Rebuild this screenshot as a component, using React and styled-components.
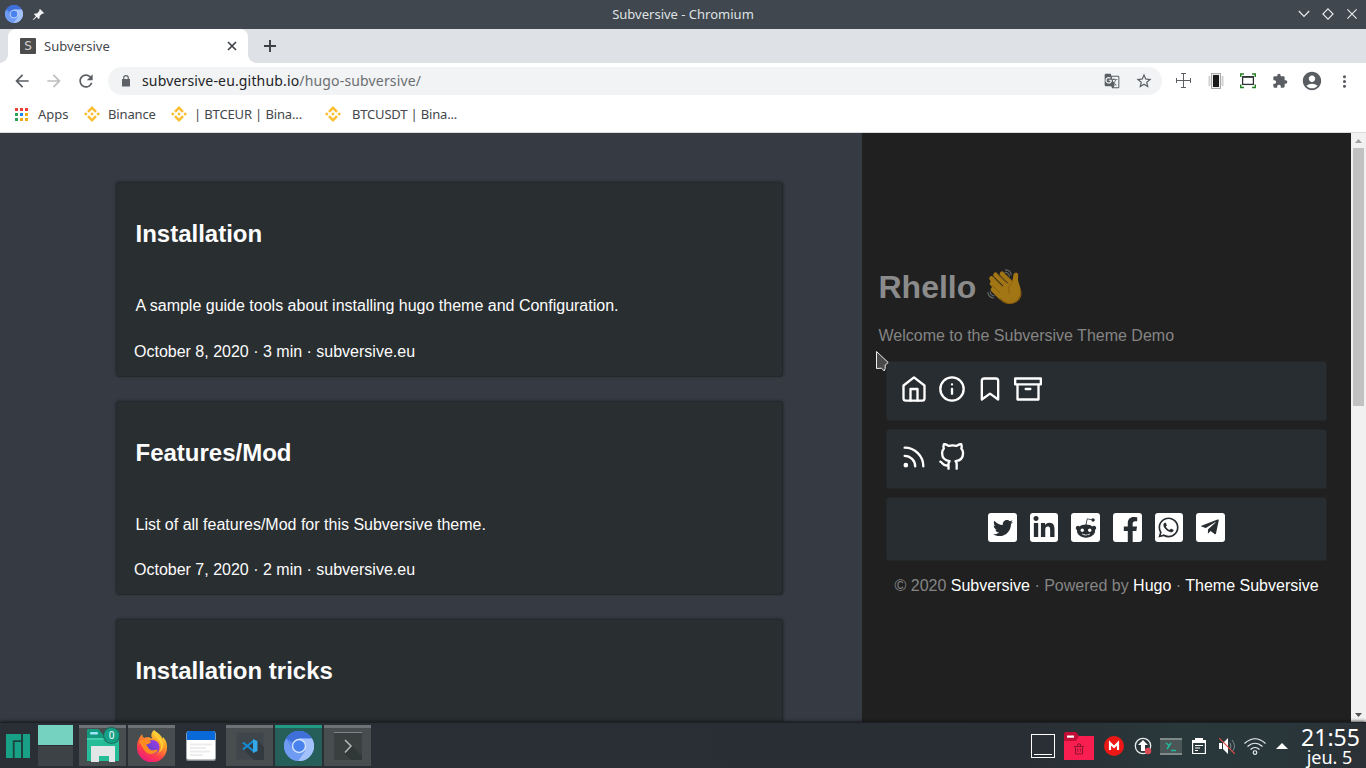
import React from "react";
import styled, { createGlobalStyle } from "styled-components";
import {
  MdArrowBack, MdArrowForward, MdRefresh, MdGTranslate, MdStarBorder,
  MdExtension, MdAccountCircle, MdMoreVert,
} from "react-icons/md";
import { SiBinance } from "react-icons/si";
import {
  FaTwitter, FaLinkedinIn, FaRedditAlien, FaFacebookF, FaWhatsapp, FaTelegramPlane,
} from "react-icons/fa";

const GlobalStyle = createGlobalStyle`
  * { box-sizing: border-box; }
  body { margin: 0; overflow: hidden; background: #202020; }
  svg { display: block; flex: none; }
`;

const Desktop = styled.div`
  position: relative;
  display: flex;
  flex-direction: column;
  width: 1366px;
  height: 768px;
  overflow: hidden;
  font-family: "Noto Sans", sans-serif;
  font-size: 13px;
`;

/* Window title */
const TitleBar = styled.header`
  display: grid;
  grid-template-columns: 1fr auto 1fr;
  align-items: center;
  height: 29px;
  padding: 0 8px 1px 5px;
  background: #40474e;
  color: #dfe2e4;
`;
const TitleSide = styled.div`
  display: flex;
  align-items: center;
  justify-content: ${(p) => (p.$end ? "flex-end" : "flex-start")};
  gap: ${(p) => p.$gap}px;
`;
const TitleText = styled.div`
  padding-left: 3px;
  line-height: 28px;
`;

/* Tabs */
const TabStrip = styled.div`
  display: flex;
  height: 34px;
  padding-left: 8px;
  background: #dee1e6;
`;
const Tab = styled.div`
  position: relative;
  display: flex;
  align-items: center;
  width: 240px;
  padding: 0 11px 0 12px;
  background: #fff;
  border-radius: 8px 8px 0 0;
  color: #45494d;
  &::before, &::after {
    content: "";
    position: absolute;
    bottom: 0;
    width: 8px;
    height: 8px;
  }
  &::before { left: -8px; background: radial-gradient(circle at 0 0, #dee1e6 7.5px, #fff 8px); }
  &::after { right: -8px; background: radial-gradient(circle at 100% 0, #dee1e6 7.5px, #fff 8px); }
`;
const Favicon = styled.div`
  width: 16px;
  height: 16px;
  margin-right: 8px;
  border-radius: 1px;
  background: #4c4c4c;
  color: #d4d4d4;
  font: 12px/16px "DejaVu Sans", sans-serif;
  text-align: center;
`;
const TabTitle = styled.span`
  flex: 1;
`;
const NewTab = styled.div`
  display: flex;
  align-items: center;
  margin-left: 16px;
`;

/* Toolbar */
const Toolbar = styled.div`
  display: flex;
  align-items: center;
  height: 36px;
  padding: 0 6px;
  background: #fff;
  color: #5f6368;
`;
const ToolSlot = styled.div`
  display: flex;
  align-items: center;
  justify-content: center;
  width: 32px;
  height: 28px;
  color: ${(p) => (p.$muted ? "#bcbec1" : "#5a5e63")};
`;
const AddressBar = styled.div`
  display: flex;
  align-items: center;
  flex: 1;
  height: 28px;
  margin: 0 6px;
  padding: 0 2px 0 14px;
  border-radius: 14px;
  background: #f1f3f4;
`;
const Url = styled.span`
  flex: 1;
  margin-left: 12px;
  color: #6b6f73;
  font-size: 14px;
  letter-spacing: 0.16px;
  line-height: 28px;
  b { color: #222427; font-weight: 400; }
`;
const BookmarkBar = styled.div`
  display: flex;
  align-items: center;
  height: 34px;
  padding: 0 0 3px 15px;
  border-bottom: 1px solid #d9dbdf;
  background: #fff;
  color: #43474b;
`;
const Bookmark = styled.div`
  display: flex;
  align-items: center;
  width: ${(p) => p.$width}px;
  letter-spacing: ${(p) => p.$tracking || 0}px;
  white-space: pre;
  svg { margin-right: ${(p) => p.$gap}px; }
`;

/* Web page */
const Viewport = styled.div`
  display: flex;
  height: 589px;
  font-family: "Liberation Sans", Arial, sans-serif;
  font-size: 16px;
  overflow: hidden;
`;
const PostList = styled.main`
  width: 862px;
  padding: 50px 79.5px 0 117px;
  background: #363a43;
`;
const Card = styled.article`
  height: 193.5px;
  margin-bottom: 25px;
  padding: 37px 18px 0 18.5px;
  border-radius: 3px;
  background: #292e31;
  box-shadow: -0.5px -1px 3px rgba(22, 25, 28, 0.8), inset -1px -1px 0 #23282b;
  color: #fdfdfd;
`;
const PostTitle = styled.h2`
  margin: 0;
  font-size: 24px;
  line-height: 28px;
`;
const Summary = styled.p`
  margin: 49px 0 0;
  line-height: 18px;
`;
const PostMeta = styled.p`
  margin: 27.6px 0 0 -1.5px;
  line-height: 18px;
`;
const Sidebar = styled.aside`
  display: flex;
  flex-direction: column;
  width: 489px;
  padding: 136px 25px 0 16.5px;
  background: #202020;
  color: #858585;
`;
const Greeting = styled.h1`
  display: flex;
  align-items: center;
  gap: 11px;
  height: 37px;
  margin: 0;
  color: #8b8b8b;
  font-size: 32px;
  line-height: 37px;
  svg { margin-bottom: 2px; }
`;
const Welcome = styled.p`
  margin: 20px 0 17px;
  line-height: 19px;
`;
const IconPanel = styled.div`
  display: flex;
  align-items: flex-start;
  justify-content: ${(p) => (p.$centered ? "center" : "flex-start")};
  gap: ${(p) => (p.$centered ? 13 : 10)}px;
  height: ${(p) => (p.$centered ? 62 : 58)}px;
  margin: 0 0 10px 8.5px;
  padding: ${(p) => (p.$centered ? 15 : 13)}px 13px 0;
  border-radius: 2px;
  background: #282d31;
  box-shadow: 0 0 1px 1px #24282a;
  color: #fff;
`;
const ShareTile = styled.span`
  display: flex;
  align-items: center;
  justify-content: center;
  width: 28.6px;
  height: 28.6px;
  padding: ${(p) => p.$pad || 0};
  border-radius: 3px;
  background: #fff;
  color: #282d31;
`;
const Footer = styled.footer`
  margin: 6px 0 0 16px;
  line-height: 20px;
  white-space: nowrap;
  b { color: #fff; font-weight: 400; }
`;
const ScrollBar = styled.div`
  display: flex;
  flex-direction: column;
  align-items: center;
  width: 15px;
  background: #f1f1f1;
`;
const ScrollThumb = styled.div`
  width: 11px;
  height: 258px;
  background: #c1c1c1;
`;
const ScrollArrow = styled.div`
  display: flex;
  align-items: center;
  height: 15px;
  margin-top: ${(p) => (p.$down ? "auto" : 0)};
`;

const Pointer = styled.svg`
  position: absolute;
  left: 875px;
  top: 350px;
`;

/* Desktop panel */
const TaskBar = styled.nav`
  display: flex;
  align-items: center;
  height: 46px;
  padding: 0 2px 0 6px;
  background: linear-gradient(90deg, #2a2f35 0, #292e34 75%, #29383b 86%, #29373b 93%, #2a3036 100%);
  box-shadow: inset 0 1px 0 #1d2023, 0 -1px 3px rgba(15, 17, 19, 0.7);
  color: #fff;
  z-index: 1;
`;
const Pager = styled.div`
  display: grid;
  grid-template-rows: 20px 20px;
  gap: 1px;
  width: 35px;
  height: 41px;
  margin: 0 6px 0 8px;
`;
const PagerCell = styled.div`
  background: ${(p) => (p.$active ? "#75d2c0" : "#3c4246")};
`;
const TaskList = styled.div`
  display: flex;
  gap: 2px;
`;
const Task = styled.div`
  display: flex;
  align-items: center;
  justify-content: center;
  position: relative;
  width: 47px;
  height: 41px;
  padding-bottom: 2px;
  border-top: 3px solid ${(p) => ({ open: "#6c7276", active: "#1f9b83", none: "transparent" })[p.$state]};
  background: ${(p) => ({ open: "#484d50", active: "#265f59", none: "transparent" })[p.$state]};
  background-clip: padding-box;
`;
const Count = styled.span`
  position: absolute;
  top: 0;
  right: 7px;
  width: 15px;
  height: 15px;
  border-radius: 50%;
  background: #16a085;
  box-shadow: 0 0 1px 1px #17695b;
  font-size: 10px;
  line-height: 15px;
  text-align: center;
`;
const Tray = styled.div`
  display: flex;
  margin-left: auto;
`;
const TraySlot = styled.div`
  display: flex;
  align-items: center;
  justify-content: center;
  width: ${(p) => p.$width}px;
  height: 46px;
  padding-top: 2px;
`;
const Clock = styled.div`
  display: flex;
  flex-direction: column;
  align-items: center;
  width: 69px;
  height: 46px;
  padding: 3px 0 0;
  white-space: nowrap;
`;
const Time = styled.div`
  padding-left: 2px;
  font-size: 23px;
  line-height: 24px;
`;
const DateLine = styled.div`
  font-size: 18px;
  line-height: 17px;
`;

const ChromiumLogo = ({ size }) => (
  <svg width={size} height={size} viewBox="0 0 30 30">
    <circle cx="15" cy="15" r="15" fill="#5b8def" />
    <path d="M15 15 2 7.5A15 15 0 0 1 28 7.5H15Z" fill="#3f6fd8" />
    <path d="M15 7.5H28A15 15 0 0 1 14 30L21.5 19Z" fill="#a3c2fb" />
    <path d="M2 7.5 8.5 18.8 15 22.5 21.5 19 14 30A15 15 0 0 1 2 7.5Z" fill="#6f9cf2" />
    <circle cx="15" cy="15" r="7.2" fill="#d7e5ff" />
    <circle cx="15" cy="15" r="5.8" fill="#4a82ed" />
  </svg>
);

const PinIcon = () => (
  <svg width="13" height="13" viewBox="0 0 13 13" fill="#f1f3f4">
    <path d="M8 1 12 5 11 6 10.3 5.6 7.7 8.1 7.6 10.3 6.7 11 4.7 9 1.4 12 .8 11.6 3.9 8.2 2 6.3 2.8 5.4 5 5.4 7.5 2.7 7.1 2Z" />
  </svg>
);

const WindowButtons = () => (
  <>
    <svg width="12" height="12" viewBox="0 0 12 12" fill="none" stroke="#eceeef" strokeWidth="1.1"><path d="m.8 3 5.2 5.4L11.2 3" /></svg>
    <svg width="12" height="12" viewBox="0 0 12 12" fill="none" stroke="#eceeef" strokeWidth="1.1"><path d="m6 .9 5.1 5.1L6 11.1.9 6Z" /></svg>
    <svg width="12" height="12" viewBox="0 0 12 12" fill="none" stroke="#eceeef" strokeWidth="1.1"><path d="m1.4 1.4 9.2 9.2m0-9.2-9.2 9.2" /></svg>
  </>
);

const CloseIcon = () => (
  <svg width="10" height="10" viewBox="0 0 10 10" fill="none" stroke="#3f4347" strokeWidth="1.7">
    <path d="m1 1 8 8m0-8-8 8" />
  </svg>
);
const PlusIcon = () => (
  <svg width="12" height="12" viewBox="0 0 12 12" fill="none" stroke="#3c4043" strokeWidth="1.9">
    <path d="M6 0v12M0 6h12" />
  </svg>
);

const LockIcon = () => (
  <svg width="8" height="12" viewBox="0 0 8 12">
    <path d="M0 4h8v7.500H0z" fill="#5f6368" />
    <path d="M1.700 5V3a2.300 2.300 0 0 1 4.600 0v2" fill="none" stroke="#5f6368" strokeWidth="1.200" />
  </svg>
);

const AppsGrid = () => (
  <svg width="13" height="13" viewBox="0 0 13 13" shapeRendering="crispEdges">
    <path d="M0 0h3v3H0zM5 0h3v3H5zM10 0h3v3h-3z" fill="#ea3f34" />
    <path d="M0 5h3v3H0zM0 10h3v3H0z" fill="#2da05a" />
    <path d="M5 5h3v3H5z" fill="#1a86f0" />
    <path d="M10 5h3v3h-3zM5 10h3v3H5zM10 10h3v3h-3z" fill="#f2ac13" />
  </svg>
);

const MoveExtension = () => (
  <svg width="16" height="16" viewBox="0 0 16 16" fill="none" stroke="#5b5e62" shapeRendering="crispEdges">
    <path d="M7.5 0v15M0 7.5h15M5 .5h5M5 14.5h5M.5 5v5M14.5 5v5" />
  </svg>
);
const PhoneExtension = () => (
  <svg width="16" height="16" viewBox="0 0 16 16" fill="none">
    <path d="M1.5 3v10M14.5 3v10" stroke="#d2d2d2" strokeWidth="2" />
    <rect x="3.5" y=".5" width="9" height="15" fill="#eee" stroke="#aaa" />
    <rect x="5" y="2" width="6" height="12" fill="#191a1c" />
  </svg>
);
const FrameExtension = () => (
  <svg width="16" height="16" viewBox="0 0 16 16" fill="none">
    <path d="M.7 4V1H4M12 1h3.300v3M15.300 11.500v3H12M4 14.500H.7v-3" stroke="#278425" strokeWidth="1.500" />
    <rect x="2.600" y="4" width="10.800" height="7.400" stroke="#303438" strokeWidth="1.300" />
    <path d="M2 3.800h12" stroke="#303438" strokeWidth="1.600" />
  </svg>
);

const WavingHand = () => (
  <svg width="35" height="36" viewBox="0 0 35 36" fill="none" strokeLinecap="round" strokeLinejoin="round">
    <path d="M18 3.200c2.200.1 4 1.800 4.400 4M18.500.9c3 .1 5.300 2.300 5.700 5M3.200 22.800c.2 2.200 1.800 3.800 4 4M.9 23.400c.4 3.200 2.800 5.300 5.500 5.500" stroke="#65696a" strokeWidth="1.100" />
    <path d="M6 21.500 15 31c4 4 10 4.300 14 1.500 4-3 5.500-8 4.500-13L31.500 13c-.8-2-.5-4-.3-7 .1-3-4-3-4.700-.4l-1.200 6.800" fill="#a37615" />
    <path d="M5 14.500 15.500 25M4.500 9.500 17 22M8.500 5.800 21 18M15 4.800 25.500 15M6 20.500l8 8" stroke="#a37615" strokeWidth="4.600" />
    <path d="M15 19h13v11H15z" fill="#a37615" />
    <path d="m6.500 9 9 9M10.500 5.500 19 14M5.500 16.500 13 24M16.500 3.800l8.900 9M25.200 13.500c-3.500 3.200-4.500 6.500-2.500 11" stroke="#80590f" strokeWidth=".7" />
    <path d="M13 29.500c5 6 12 6 16.500 3 3.300-2.400 4.700-6 4.400-10" stroke="#8a5c0e" strokeWidth="1.200" />
  </svg>
);

const LineIcon = ({ children }) => (
  <svg width="28" height="28" viewBox="0 0 24 24" fill="none" stroke="currentColor" strokeWidth="2" strokeLinecap="round" strokeLinejoin="round">
    {children}
  </svg>
);

const ManjaroLogo = () => (
  <svg width="24" height="26" viewBox="0 -2 24 26">
    <path d="M0 0h15v7H7v17H0zM8.500 8H15v16H8.500zM17 0h7v24h-7z" fill="#19a187" />
    <path d="M15 7H7.500v17M16 0v24" stroke="#17493f" strokeWidth="1.400" fill="none" />
  </svg>
);
const FilesIcon = () => (
  <svg width="34" height="34" viewBox="0 0 34 34">
    <path d="M1 2a2 2 0 0 1 2-2h9l5 6h14a2 2 0 0 1 2 2v24H1z" fill="#25bd98" />
    <path d="M1 2a2 2 0 0 1 2-2h9l5 6v3H1z" fill="#149a7e" />
    <path d="M1 9h32v2H1z" fill="#43cfae" />
    <rect x="4" y="3" width="8" height="2.500" rx="1" fill="#9be5fb" />
    <path d="M5 33V17h24v16h-6v-6H13v6z" fill="#e3e6e6" />
  </svg>
);
const FirefoxIcon = () => (
  <svg width="32" height="32" viewBox="0 0 32 32">
    <defs>
      <linearGradient id="fire" x1=".8" y1="0" x2=".25" y2="1">
        <stop offset="0" stopColor="#fff044" /><stop offset=".35" stopColor="#ff9b24" />
        <stop offset=".7" stopColor="#ff3b4c" /><stop offset="1" stopColor="#e91786" />
      </linearGradient>
      <linearGradient id="globe" x1="1" y1="0" x2="0" y2="1">
        <stop offset="0" stopColor="#a43bea" /><stop offset="1" stopColor="#5044bf" />
      </linearGradient>
    </defs>
    <path d="M18 0c-3 3-3.500 6-1.500 9-3-2-6-2-8.500-1-1-1-2-2-1.500-4C4 6 1 11 1 17a15 15 0 0 0 30 1c.300-4-1-8-4-11l-.5 2C25 4 21 3 18 0Z" fill="url(#fire)" />
    <circle cx="16.500" cy="17" r="7" fill="url(#globe)" />
    <path d="M3 12c2-3 5-3 7-1 2-1 4 0 5 1-1 2-5 2-5 3 2 1 2 4 5 5s5-1 7 0c-3 5-10 5-13 1-2-2-3-6-6-9Z" fill="#ff8c23" />
    <path d="M18 1c-1 6 7 8 7 15 0 3-1 5-3 7 4-2 6-6 5-10-1-5-7-6-9-12Z" fill="#ffd035" />
  </svg>
);
const CalendarIcon = () => (
  <svg width="30" height="30" viewBox="0 0 30 30">
    <rect y="1" width="30" height="29" rx="2" fill="#848b91" />
    <rect x=".7" width="28.600" height="28.500" rx="2" fill="#fff" />
    <path d="M.7 2a2 2 0 0 1 2-2h24.600a2 2 0 0 1 2 2v7H.7z" fill="#0969d9" />
    <path d="M4 13.500h22M4 17h16M4 20.500h20M4 24h13" stroke="#ededed" strokeWidth="2" />
  </svg>
);
const CodeIcon = () => (
  <svg width="28" height="28" viewBox="0 0 28 28">
    <rect x=".5" y=".5" width="27" height="27" rx="1" fill="#3e464b" />
    <path d="m20 7 8 8v13H18L8 18z" fill="#343b40" />
    <path d="m7 10.500 11 9M7 17.500l11-9" stroke="#168bd4" strokeWidth="2.200" />
    <path d="m17 7 4.500 2v10L17 21z" fill="#35a8ec" />
  </svg>
);
const ConsoleIcon = () => (
  <svg width="28" height="28" viewBox="0 0 28 28">
    <rect width="28" height="28" rx="1" fill="#39403f" />
    <path d="m18 14 10 10v4H17l-6-6z" fill="#303737" />
    <path d="M0 .5h28" stroke="#7d8584" />
    <path d="m11 8 6 6-6 6.500" fill="none" stroke="#b4b9b8" strokeWidth="1.500" />
  </svg>
);

const ShowDesktopIcon = () => (
  <svg width="24" height="24" viewBox="0 0 24 24" fill="none" stroke="#fff" shapeRendering="crispEdges"><path d="M.5.5h23v23H.5zM3 20.500h18" /></svg>
);
const TrashFolderIcon = () => (
  <svg width="30" height="28" viewBox="0 0 30 28">
    <path d="M0 4h30v24H0z" fill="#f91e50" />
    <path d="M0 2a2 2 0 0 1 2-2h10l3 4-3 5H0z" fill="#c20d37" />
    <rect x="3" y="3.500" width="7" height="2.200" fill="#fff" />
    <path d="M10 14.500h10M13.500 14v-2h3v2M11.500 15v7h7v-7M13.700 16.500v3M16.300 16.500v3" stroke="#91122f" fill="none" />
  </svg>
);
const MegaIcon = () => (
  <svg width="20" height="20" viewBox="0 0 20 20"><circle cx="10" cy="10" r="10" fill="#ed1715" /><path d="M6 14V7l4 4 4-4v7" fill="none" stroke="#fff" strokeWidth="2.200" /></svg>
);
const UpdateIcon = () => (
  <svg width="18" height="18" viewBox="0 0 18 18"><circle cx="9" cy="9" r="7.700" fill="none" stroke="#e8ebeb" strokeWidth="1.300" /><path d="m9 3 5 5h-3v6H7V8H4z" fill="#fff" /><circle cx="14" cy="14" r="3.200" fill="#dc4856" /></svg>
);
const TerminalIcon = () => (
  <svg width="22" height="17" viewBox="0 0 22 17"><path d="M0 0h22v17H0z" fill="#4b5757" /><path d="M0 1h22M0 16h22" stroke="#929b9c" strokeWidth="1.500" /><path d="m6 5 3 2.500M11 5 7 11M11 12.500h5" fill="none" stroke="#25b99c" strokeWidth="1.500" /></svg>
);
const ClipboardIcon = () => (
  <svg width="14" height="16" viewBox="0 0 14 16" fill="none"><path d="M.6 2.500h12.800v13H.6z" stroke="#fff" strokeWidth="1.200" /><path d="M3 0h8v2h2v3H1V2h2z" fill="#fff" /><path d="M3 7.500h8M3 10h5M3 12.500h3" stroke="#fff" /></svg>
);
const MutedIcon = () => (
  <svg width="16" height="16" viewBox="0 0 16 16" fill="none"><path d="M0 5h3v6H0zM4 5l5-5v16l-5-5z" fill="#fff" /><path d="M11 5q2 3 0 6M13 2q5 6 0 12" stroke="#7f898b" /><path d="m0 0 16 16" stroke="#e34a44" strokeWidth="1.200" /></svg>
);
const WifiIcon = () => (
  <svg width="22" height="17" viewBox="0 0 22 17" fill="none" stroke="#f0f2f2" strokeWidth="1.150"><path d="M.5 5.500q10.500-9.500 21 0M3.500 8.500q7.500-6.500 15 0M6.500 11.500q4.500-4 9 0" /><circle cx="11" cy="14.500" r="1.800" /></svg>
);
const ExpandIcon = () => (
  <svg width="12" height="6" viewBox="0 0 12 6"><path d="M0 6 6 0l6 6z" fill="#fff" /></svg>
);

const posts = [
  { title: "Installation", summary: "A sample guide tools about installing hugo theme and Configuration.", meta: "October 8, 2020 · 3 min · subversive.eu" },
  { title: "Features/Mod", summary: "List of all features/Mod for this Subversive theme.", meta: "October 7, 2020 · 2 min · subversive.eu" },
  { title: "Installation tricks" },
];

const shareLinks = [
  { name: "twitter", Icon: FaTwitter, size: 20, pad: "1px 0 0 1px" },
  { name: "linkedin", Icon: FaLinkedinIn, size: 24, pad: "2px 0 0" },
  { name: "reddit", Icon: FaRedditAlien, size: 22, pad: "1px 0 0" },
  { name: "facebook", Icon: FaFacebookF, size: 25, pad: "4px 0 0 6px" },
  { name: "whatsapp", Icon: FaWhatsapp, size: 23, pad: "0" },
  { name: "telegram", Icon: FaTelegramPlane, size: 20, pad: "0" },
];

export default function App() {
  return (
    <Desktop>
      <GlobalStyle />
      <TitleBar>
        <TitleSide $gap={9}><ChromiumLogo size={18} /><PinIcon /></TitleSide>
        <TitleText>Subversive - Chromium</TitleText>
        <TitleSide $end $gap={12}><WindowButtons /></TitleSide>
      </TitleBar>
      <TabStrip>
        <Tab>
          <Favicon>S</Favicon>
          <TabTitle>Subversive</TabTitle>
          <CloseIcon />
        </Tab>
        <NewTab><PlusIcon /></NewTab>
      </TabStrip>
      <Toolbar>
        <ToolSlot><MdArrowBack size={20} /></ToolSlot>
        <ToolSlot $muted><MdArrowForward size={20} /></ToolSlot>
        <ToolSlot><MdRefresh size={20} /></ToolSlot>
        <AddressBar>
          <LockIcon />
          <Url><b>subversive-eu.github.io</b>/hugo-subversive/</Url>
          <ToolSlot><MdGTranslate size={16} /></ToolSlot>
          <ToolSlot><MdStarBorder size={18} /></ToolSlot>
        </AddressBar>
        <ToolSlot><MoveExtension /></ToolSlot>
        <ToolSlot><PhoneExtension /></ToolSlot>
        <ToolSlot><FrameExtension /></ToolSlot>
        <ToolSlot><MdExtension size={16} /></ToolSlot>
        <ToolSlot><MdAccountCircle size={22} /></ToolSlot>
        <ToolSlot><MdMoreVert size={19} /></ToolSlot>
      </Toolbar>
      <BookmarkBar>
        <Bookmark $width={69} $gap={10}><AppsGrid />Apps</Bookmark>
        <Bookmark $width={87} $gap={8} $tracking={-0.15}><SiBinance size={16} color="#fabd2f" />Binance</Bookmark>
        <Bookmark $width={154} $gap={7} $tracking={-0.14}><SiBinance size={16} color="#fabd2f" />| BTCEUR | Bina...</Bookmark>
        <Bookmark $width={150} $gap={11} $tracking={-0.18}><SiBinance size={16} color="#fabd2f" />BTCUSDT | Bina...</Bookmark>
      </BookmarkBar>

      <Viewport>
        <PostList>
          {posts.map((post) => (
            <Card key={post.title}>
              <PostTitle>{post.title}</PostTitle>
              {post.summary && <Summary>{post.summary}</Summary>}
              {post.meta && <PostMeta>{post.meta}</PostMeta>}
            </Card>
          ))}
        </PostList>
        <Sidebar>
          <Greeting>Rhello <WavingHand /></Greeting>
          <Welcome>Welcome to the Subversive Theme Demo</Welcome>
          <IconPanel>
            <LineIcon><path d="m3 9 9-7 9 7v11a2 2 0 0 1-2 2H5a2 2 0 0 1-2-2z" /><path d="M9 22V12h6v10" /></LineIcon>
            <LineIcon><circle cx="12" cy="12" r="10" /><path d="M12 16v-4M12 8h.01" /></LineIcon>
            <LineIcon><path d="m19 21-7-5-7 5V5a2 2 0 0 1 2-2h10a2 2 0 0 1 2 2z" /></LineIcon>
            <LineIcon><path d="M21 8v13H3V8M1 3h22v5H1zM10 12h4" /></LineIcon>
          </IconPanel>
          <IconPanel>
            <LineIcon><path d="M4 11a9 9 0 0 1 9 9M4 4a16 16 0 0 1 16 16" /><circle cx="5" cy="19" r="1" /></LineIcon>
            <LineIcon><path d="M9 19c-5 1.500-5-2.500-7-3m14 6v-3.870a3.370 3.370 0 0 0-.94-2.610c3.140-.35 6.440-1.540 6.440-7A5.440 5.440 0 0 0 20 4.770 5.070 5.070 0 0 0 19.910 1S18.730.65 16 2.480a13.380 13.380 0 0 0-7 0C6.270.65 5.090 1 5.090 1A5.070 5.070 0 0 0 5 4.770a5.440 5.440 0 0 0-1.500 3.780c0 5.420 3.300 6.610 6.440 7A3.370 3.370 0 0 0 9 18.130V22" /></LineIcon>
          </IconPanel>
          <IconPanel $centered>
            {shareLinks.map(({ name, Icon, size, pad }) => (
              <ShareTile key={name} $pad={pad}><Icon size={size} /></ShareTile>
            ))}
          </IconPanel>
          <Footer>© 2020 <b>Subversive</b> · Powered by <b>Hugo</b> · <b>Theme Subversive</b></Footer>
        </Sidebar>
        <ScrollBar>
          <ScrollArrow><svg width="7" height="4" viewBox="0 0 7 4"><path d="M0 4 3.500 0 7 4z" fill="#a0a0a0" /></svg></ScrollArrow>
          <ScrollThumb />
          <ScrollArrow $down><svg width="7" height="4" viewBox="0 0 7 4"><path d="M0 0h7L3.500 4z" fill="#505050" /></svg></ScrollArrow>
        </ScrollBar>
      </Viewport>

      <TaskBar>
        <ManjaroLogo />
        <Pager><PagerCell $active /><PagerCell /></Pager>
        <TaskList>
          <Task $state="open"><FilesIcon /><Count>0</Count></Task>
          <Task $state="open"><FirefoxIcon /></Task>
          <Task $state="none"><CalendarIcon /></Task>
          <Task $state="open"><CodeIcon /></Task>
          <Task $state="active"><ChromiumLogo size={30} /></Task>
          <Task $state="open"><ConsoleIcon /></Task>
        </TaskList>
        <Tray>
          <TraySlot $width={35}><ShowDesktopIcon /></TraySlot>
          <TraySlot $width={38}><TrashFolderIcon /></TraySlot>
          <TraySlot $width={31}><MegaIcon /></TraySlot>
          <TraySlot $width={28}><UpdateIcon /></TraySlot>
          <TraySlot $width={28}><TerminalIcon /></TraySlot>
          <TraySlot $width={28}><ClipboardIcon /></TraySlot>
          <TraySlot $width={28}><MutedIcon /></TraySlot>
          <TraySlot $width={28}><WifiIcon /></TraySlot>
          <TraySlot $width={26}><ExpandIcon /></TraySlot>
          <Clock><Time>21:55</Time><DateLine>jeu. 5</DateLine></Clock>
        </Tray>
      </TaskBar>

      <Pointer width="15" height="23" viewBox="0 0 15 23">
        <path d="M1.500 1.500v17l5-.3 2.700 2.700 1-2.500V15l3-2.500z" fill="#4a4a4a" stroke="#eee" />
      </Pointer>
    </Desktop>
  );
}
